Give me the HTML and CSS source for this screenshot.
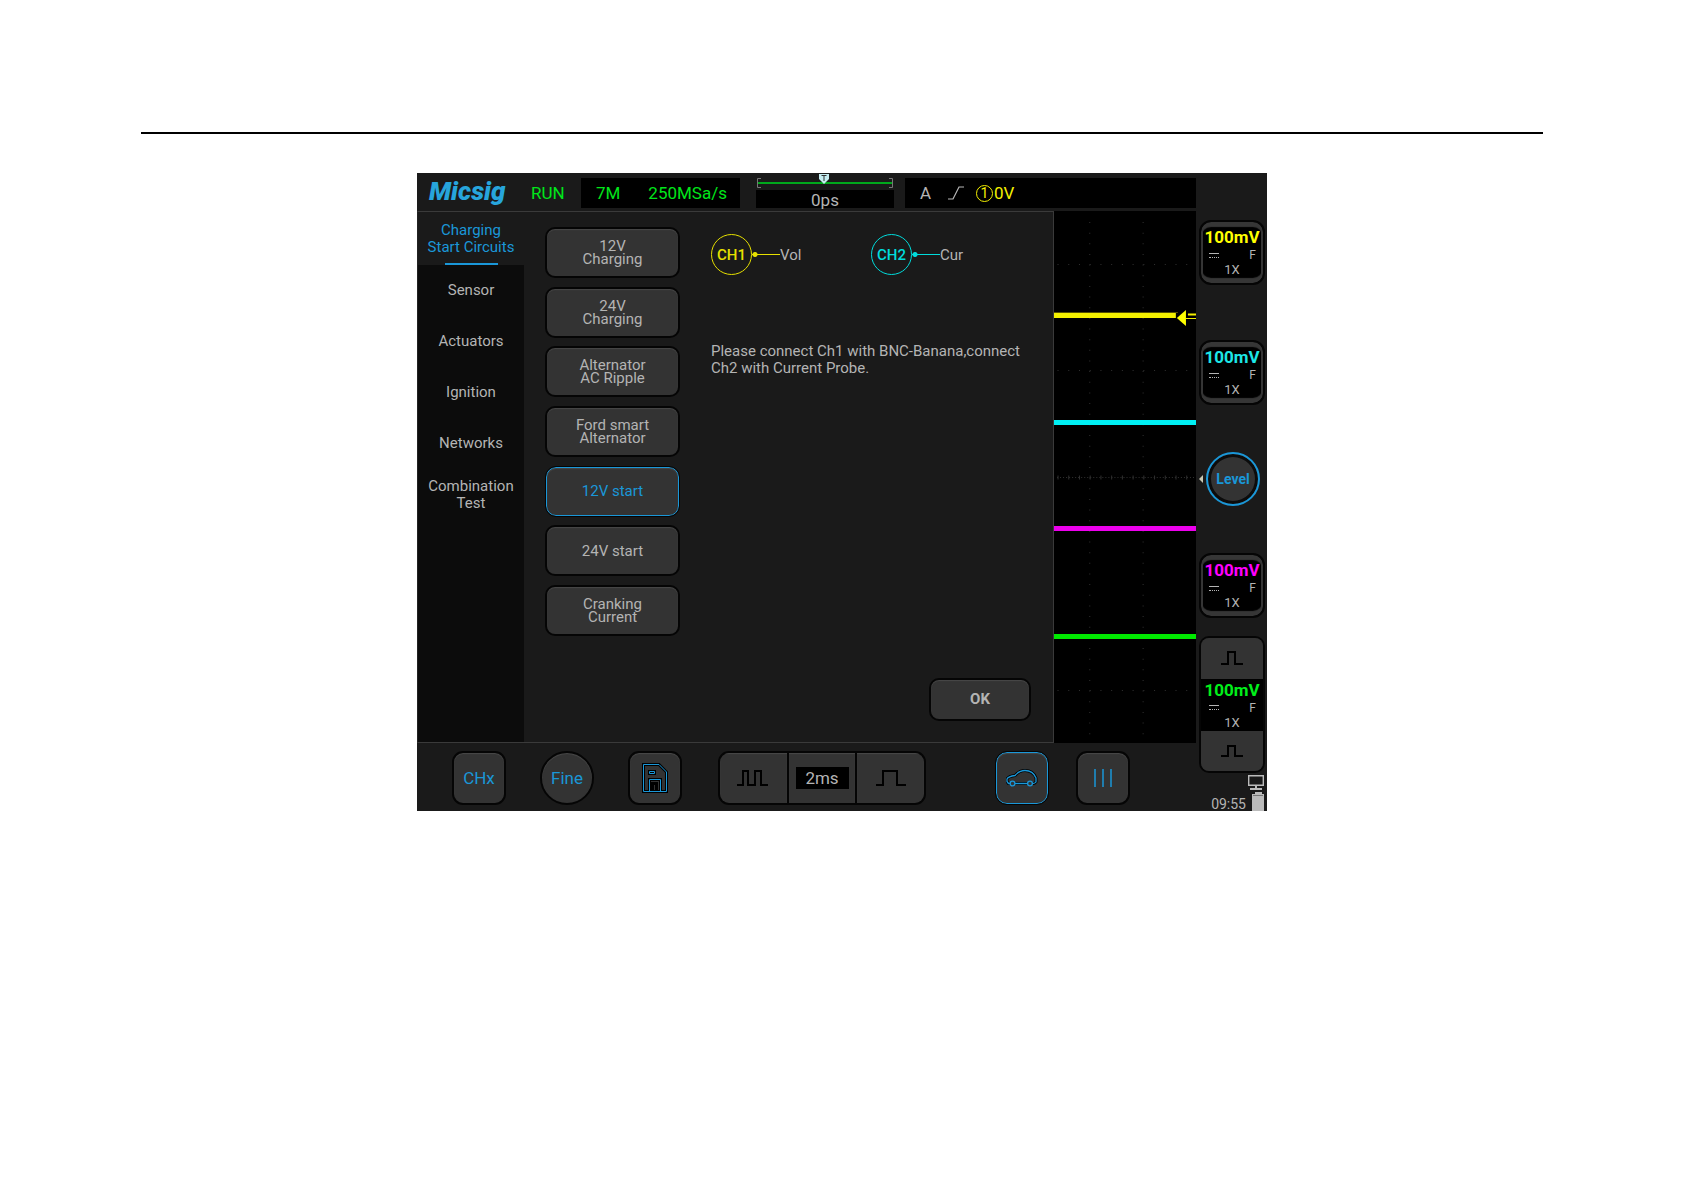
FILE: index.html
```
<!DOCTYPE html>
<html lang="en">
<head>
    <meta charset="UTF-8">
    <meta name="viewport" content="width=device-width, initial-scale=1.0">
    <title>Micsig Oscilloscope</title>
    <link rel="stylesheet" href="styles.css">
</head>
<body>

<hr class="rule">

<div class="scope">
    <div class="left">
        <header class="topbar">
            <div class="logo">Micsig</div>
            <div class="run">RUN</div>
            <div class="readout">
                <span>7M</span>
                <span>250MSa/s</span>
            </div>
            <div class="timepos">
                <svg width="138" height="16" viewBox="0 0 138 16">
                    <path d="M5 4.500H1.500V13.500H5M133 4.500H136.500V13.500H133" fill="none" stroke="#777"/>
                    <path d="M2 9H136" stroke="#00a81c" stroke-width="2"/>
                    <path d="M63 0H73V5L68 10L63 5Z" fill="#c4ecf0"/>
                    <path d="M65.500 1.500H70.500M68 1.500V7" stroke="#333"/>
                </svg>
                <div class="delay">0ps</div>
            </div>
            <div class="trigger">
                <span class="mode">A</span>
                <svg width="18" height="16" viewBox="0 0 18 16">
                    <path d="M1 14H6L12 2H17" fill="none" stroke="#b8b8b8" stroke-width="1.200"/>
                </svg>
                <span class="source">1</span>
                <span class="volts">0V</span>
            </div>
        </header>

        <main class="screen">
            <section class="panel">
                <nav class="tabs">
                    <a href="#charging" class="active">Charging<br>Start Circuits</a>
                    <a href="#sensor">Sensor</a>
                    <a href="#actuators">Actuators</a>
                    <a href="#ignition">Ignition</a>
                    <a href="#networks">Networks</a>
                    <a href="#combination">Combination<br>Test</a>
                </nav>

                <div class="menu">
                    <button type="button">12V<br>Charging</button>
                    <button type="button">24V<br>Charging</button>
                    <button type="button">Alternator<br>AC Ripple</button>
                    <button type="button">Ford smart<br>Alternator</button>
                    <button type="button" class="selected">12V start</button>
                    <button type="button">24V start</button>
                    <button type="button">Cranking<br>Current</button>
                </div>

                <div class="detail">
                    <div class="probes">
                        <div class="probe ch1">
                            <span class="ring">CH1</span><span class="lead"></span><span class="name">Vol</span>
                        </div>
                        <div class="probe ch2">
                            <span class="ring">CH2</span><span class="lead"></span><span class="name">Cur</span>
                        </div>
                    </div>
                    <p>Please connect Ch1 with BNC-Banana,connect Ch2 with Current Probe.</p>
                    <button type="button" class="ok">OK</button>
                </div>
            </section>

            <svg class="wave" viewBox="0 0 141 532" preserveAspectRatio="none">
                <!-- graticule -->
                <g stroke="#303030" stroke-width="1">
                    <path d="M35.500 11V532M88.500 11V532" stroke-dasharray="1 9.650"/>
                    <path d="M3.500 53.500H141M3.500 159.500H141M3.500 479.500H141" stroke-dasharray="1 9.650"/>
                    <path d="M3 266.500H141" stroke-dasharray="1 2"/>
                    <path d="M3.500 266.500H141" stroke-width="4" stroke-dasharray="1 9.650"/>
                </g>
                <!-- traces -->
                <path d="M0 101.500H123" stroke="#555000" stroke-width="1"/>
                <path d="M0 104.500H121" stroke="#f4f000" stroke-width="5"/>
                <path d="M0 211.500H141" stroke="#00f0f4" stroke-width="5"/>
                <path d="M0 317.500H141" stroke="#ec00ec" stroke-width="5"/>
                <path d="M0 425.500H141" stroke="#00ea00" stroke-width="5"/>
                <!-- trigger level marker -->
                <path d="M131 99V115L122 107Z" fill="#ff0"/>
                <path d="M133 103.500H141" stroke="#f4f000" stroke-width="2"/>
                <path d="M131 107.500H141" stroke="#f4f000"/>
            </svg>
        </main>

        <footer class="toolbar">
            <button type="button" class="tool">CHx</button>
            <button type="button" class="tool round">Fine</button>
            <button type="button" class="tool" aria-label="Save">
                <svg width="26" height="30" viewBox="0 0 26 30" fill="none">
                    <g stroke="#000" stroke-width="3">
                        <path d="M1.500 1.500H17L24.500 9V28.500H1.500Z"/>
                        <path d="M7.500 8.500H12.500V10.500H7.500Z"/>
                        <path d="M7.500 28V16.500H18.500V28M10.500 28V20.500H14.500V28"/>
                    </g>
                    <g stroke="#1a97d8">
                        <path d="M1.500 1.500H17L24.500 9V28.500H1.500Z"/>
                        <path d="M7.500 8.500H12.500V10.500H7.500Z"/>
                        <path d="M7.500 28V16.500H18.500V28"/>
                    </g>
                </svg>
            </button>
            <div class="timebase">
                <button type="button" aria-label="Slower">
                    <svg width="32" height="18" viewBox="0 0 32 18">
                        <path d="M0 16H6V2H11V16H18V2H24V16H31" fill="none" stroke="#000" stroke-width="2"/>
                    </svg>
                </button>
                <button type="button"><span>2ms</span></button>
                <button type="button" aria-label="Faster">
                    <svg width="32" height="18" viewBox="0 0 32 18">
                        <path d="M1 16H8V2H22V16H31" fill="none" stroke="#000" stroke-width="2"/>
                    </svg>
                </button>
            </div>
            <button type="button" class="tool car" aria-label="Automotive">
                <svg width="32" height="18" viewBox="0 0 32 18" fill="none" stroke-linejoin="round">
                    <g stroke="#000" stroke-width="3">
                        <path d="M4.500 14.500H2.500L1 12.500V10C2 8 5 7 9 6.500C12 3 15 1.500 19 1.500C24 1.500 28 4 30 9V13C29 14.500 28 14.500 26.500 14.500M21.500 14.500H9"/>
                    </g>
                    <g stroke="#1a97d8" stroke-width="1.300">
                        <path d="M4.500 14.500H2.500L1 12.500V10C2 8 5 7 9 6.500C12 3 15 1.500 19 1.500C24 1.500 28 4 30 9V13C29 14.500 28 14.500 26.500 14.500M21.500 14.500H9"/>
                        <circle cx="6.500" cy="14.500" r="2.400"/>
                        <circle cx="24" cy="14.500" r="2.400"/>
                    </g>
                </svg>
            </button>
            <button type="button" class="tool" aria-label="Cursors">
                <svg width="20" height="18" viewBox="0 0 20 18">
                    <path d="M2 0V18M10 0V18M18 0V18" stroke="#1a97d8" stroke-width="1.500"/>
                </svg>
            </button>
        </footer>
    </div>

    <aside class="channels">
        <button type="button" class="channel yellow">
            <span class="scale">100mV</span>
            <span class="coupling"><i></i>F</span>
            <span class="ratio">1X</span>
        </button>
        <button type="button" class="channel cyan">
            <span class="scale">100mV</span>
            <span class="coupling"><i></i>F</span>
            <span class="ratio">1X</span>
        </button>
        <div class="level-row">
            <span class="arrow"></span>
            <button type="button" class="level">Level</button>
        </div>
        <button type="button" class="channel magenta">
            <span class="scale">100mV</span>
            <span class="coupling"><i></i>F</span>
            <span class="ratio">1X</span>
        </button>
        <div class="stack green">
            <button type="button" aria-label="Scale up">
                <svg width="22" height="16" viewBox="0 0 22 16">
                    <path d="M0 14H7V2H14V14H22" fill="none" stroke="#000" stroke-width="2"/>
                </svg>
            </button>
            <div class="display">
                <span class="scale">100mV</span>
                <span class="coupling"><i></i>F</span>
                <span class="ratio">1X</span>
            </div>
            <button type="button" aria-label="Scale down">
                <svg width="22" height="14" viewBox="0 0 22 14">
                    <path d="M0 12H7V2H14V12H22" fill="none" stroke="#000" stroke-width="2"/>
                </svg>
            </button>
        </div>
        <div class="status">
            <span>09:55</span>
            <svg width="18" height="38" viewBox="0 0 18 38">
                <path d="M1.700 2.700H16.300V12.300H1.700Z" fill="none" stroke="#bbb" stroke-width="1.400"/>
                <path d="M8 13H10V15H15V17H3V15H8Z" fill="#bbb"/>
                <path d="M8 19H15V21H17V38H5V21H8Z" fill="#bbb"/>
                <path d="M6 22.500H16" stroke="#777"/>
            </svg>
        </div>
    </aside>
</div>

</body>
</html>
```

FILE: styles.css
```
* {
    box-sizing: border-box;
}
body {
    font-family: Roboto, sans-serif;
    font-size: 15px;
    line-height: 17px;
    background-color: #fff;
    color: #b4b4b4;
    margin: 0;
    padding: 132px 141px 40px;
}
svg {
    display: block;
}
button {
    font: inherit;
    color: inherit;
    margin: 0;
    padding: 0;
    cursor: pointer;
    border: 2px solid #050505;
    background-color: #333;
}
.rule {
    margin: 0;
    border: none;
    height: 2px;
    background-color: #000;
}
.scope {
    display: flex;
    max-width: 850px;
    margin: 39px auto 0;
    background-color: #1a1a1a;
}
.left {
    flex: 1;
    display: flex;
    flex-direction: column;
}

/* top bar */
.topbar {
    display: flex;
    height: 38px;
    padding: 5px 0 3px 12px;
    font-size: 17px;
    line-height: 31px;
    color: #00e61a;
}
.logo {
    width: 102px;
    font-size: 26px;
    line-height: 26px;
    font-weight: 900;
    font-style: italic;
    color: #27a5dc;
}
.run {
    width: 50px;
    line-height: 30px;
}
.readout {
    display: flex;
    justify-content: space-between;
    width: 159px;
    padding: 0 13px 0 15px;
    background-color: #000;
}
.timepos {
    width: 138px;
    margin: -4px 0 0 16px;
}
.delay {
    height: 18px;
    line-height: 20px;
    text-align: center;
    background-color: #000;
    color: #b4b4b4;
}
.trigger {
    flex: 1;
    display: flex;
    align-items: center;
    margin-left: 11px;
    padding-left: 15px;
    background-color: #000;
    color: #f4f000;
}
.mode {
    width: 27px;
    color: #b4b4b4;
}
.source {
    width: 17px;
    height: 17px;
    margin-left: 11px;
    border: 1px solid #f4f000;
    border-radius: 50%;
    font-size: 14px;
    line-height: 15px;
    text-align: center;
}
.volts {
    margin-left: 1px;
}

/* main screen */
.screen {
    display: flex;
    height: 532px;
}
.panel {
    flex: 1;
    display: flex;
    border: 1px solid #3a3a3a;
    border-left-color: #222;
}
.wave {
    width: 142px;
    height: 532px;
    background-color: #000;
}
.tabs {
    display: flex;
    flex-direction: column;
    width: 106px;
    background-color: #0c0c0c;
}
.tabs a {
    display: flex;
    flex-direction: column;
    justify-content: center;
    height: 51px;
    text-align: center;
    text-decoration: none;
    color: #b4b4b4;
}
.tabs a.active {
    height: 53px;
    color: #1a97d8;
    background: linear-gradient(#1a97d8, #1a97d8) center bottom / 53px 2px no-repeat #1a1a1a;
}
.menu {
    display: flex;
    flex-direction: column;
    justify-content: space-between;
    width: 135px;
    height: 409px;
    margin: 15px 0 0 21px;
}
.menu button {
    height: 51px;
    padding-top: 1px;
    border-radius: 10px;
    line-height: 13px;
    box-shadow: inset 0 1px 1px #484848;
}
.menu .selected, .car {
    border-color: #1a97d8;
    border-width: 1px;
    outline: 1px solid #050505;
    color: #1a97d8;
}
.menu .selected {
    height: 49px;
    margin: 1px;
    padding-top: 0;
}
.detail {
    flex: 1;
    display: flex;
    flex-direction: column;
    padding: 22px 22px 21px 31px;
}
.probes {
    display: flex;
}
.probe {
    display: flex;
    align-items: center;
    width: 160px;
    color: #e6e000;
}
.probe.ch2 {
    color: #00dcdc;
}
.ring {
    width: 41px;
    height: 41px;
    border: 1px solid;
    border-radius: 50%;
    line-height: 41px;
    text-align: center;
    font-weight: 500;
}
.lead {
    width: 28px;
    height: 5px;
    background: radial-gradient(circle at 3px 50%, currentColor 2px, transparent 3px), linear-gradient(currentColor, currentColor) center / 100% 1px no-repeat;
}
.name {
    padding-top: 2px;
    color: #b4b4b4;
}
.detail p {
    max-width: 330px;
    margin: 68px 0 0;
}
.ok {
    width: 102px;
    height: 43px;
    margin: auto 0 0 auto;
    border-radius: 10px;
    font-weight: 700;
    box-shadow: inset 0 1px 1px #484848;
}

/* bottom toolbar */
.toolbar {
    display: flex;
    height: 68px;
    padding: 8px 0 0 35px;
    font-size: 17px;
}
.tool {
    display: flex;
    align-items: center;
    justify-content: center;
    width: 54px;
    height: 54px;
    margin-right: 34px;
    border-radius: 11px;
    color: #1a97d8;
    box-shadow: inset 0 1px 1px #484848;
}
.round {
    border-radius: 50%;
}
.timebase {
    display: flex;
    height: 54px;
    width: 208px;
    margin: 0 69px 0 2px;
    border: 2px solid #050505;
    border-radius: 11px;
    background-color: #050505;
    gap: 2px;
    overflow: hidden;
}
.timebase button {
    flex: 1;
    display: flex;
    align-items: center;
    justify-content: center;
    border: none;
    box-shadow: inset 0 1px 1px #484848;
}
.timebase span {
    width: 53px;
    line-height: 22px;
    background-color: #000;
}
.car {
    width: 52px;
    height: 52px;
    margin: 1px 28px 0 1px;
}

/* channel column */
.channels {
    width: 71px;
    display: flex;
    flex-direction: column;
    padding: 47px 2px 0 3px;
}
.channel, .display {
    display: flex;
    flex-direction: column;
    background-color: #000;
}
.channel {
    height: 65px;
    margin-bottom: 55px;
    border: 2px solid #050505;
    border-radius: 12px;
    box-shadow: inset 0 5px 1px #363636, inset 0 -5px 1px #363636, inset 2px 0 #363636, inset -2px 0 #363636;
}
.scale {
    padding-top: 5px;
    font-size: 17px;
    line-height: 20px;
    font-weight: 700;
    text-align: center;
}
.yellow .scale {
    color: #ff0;
}
.cyan .scale {
    color: #1ce6e6;
}
.magenta .scale {
    color: #f0f;
}
.green .scale {
    color: #00f01a;
}
.coupling {
    display: flex;
    justify-content: space-between;
    align-items: center;
    padding: 0 7px 0 8px;
    font-size: 12px;
    line-height: 16px;
}
.coupling i {
    width: 10px;
    height: 5px;
    border-top: 1px solid #b4b4b4;
    border-bottom: 1px dotted #b4b4b4;
}
.ratio {
    font-size: 13px;
    line-height: 14px;
    text-align: center;
}
.cyan {
    margin-bottom: 47px;
}
.level-row {
    display: flex;
    align-items: center;
    gap: 3px;
    margin-bottom: 47px;
}
.arrow {
    border: 4px solid transparent;
    border-left: none;
    border-right-color: #c8c8b4;
}
.level {
    width: 54px;
    height: 54px;
    border: 2px solid #1a97d8;
    border-radius: 50%;
    color: #1a97d8;
    font-size: 14px;
    font-weight: 700;
    box-shadow: inset 0 0 0 3px #0c0c0c;
}
.magenta {
    margin-bottom: 18px;
}
.stack {
    display: flex;
    flex-direction: column;
    height: 137px;
    border: 2px solid #050505;
    border-radius: 10px;
    overflow: hidden;
}
.stack button {
    flex: 1;
    display: flex;
    align-items: center;
    justify-content: center;
    border: none;
}
.display {
    height: 52px;
}
.display .scale {
    padding-top: 1px;
}
.status {
    display: flex;
    align-items: flex-end;
    justify-content: flex-end;
    gap: 1px;
    font-size: 14px;
    line-height: 14px;
}
```
